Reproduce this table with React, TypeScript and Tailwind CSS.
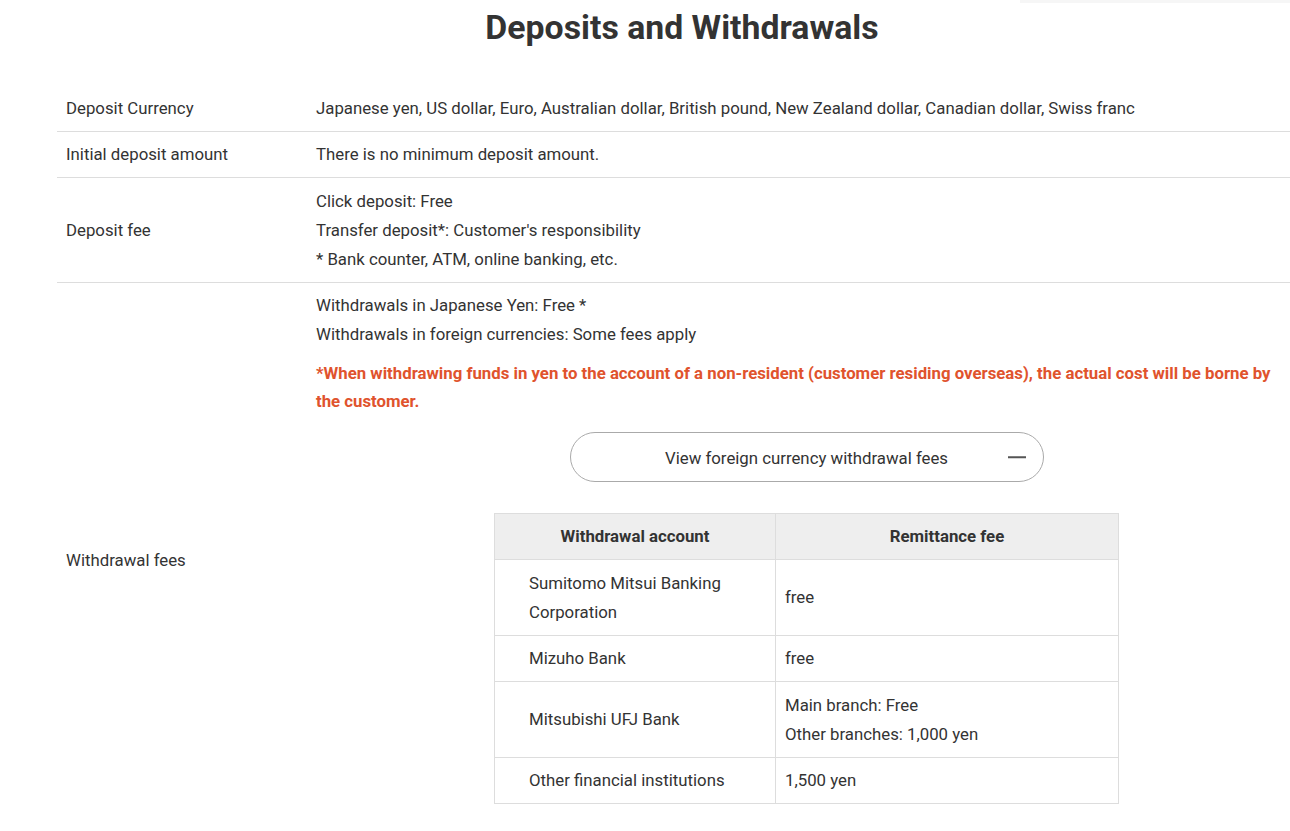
const font = { fontFamily: 'Roboto, "Noto Sans", sans-serif' };

const feeRows: { account: string[]; fee: string[] }[] = [
  { account: ['Sumitomo Mitsui Banking', 'Corporation'], fee: ['free'] },
  { account: ['Mizuho Bank'], fee: ['free'] },
  { account: ['Mitsubishi UFJ Bank'], fee: ['Main branch: Free', 'Other branches: 1,000 yen'] },
  { account: ['Other financial institutions'], fee: ['1,500 yen'] },
];

function Row({ label, children, last }: { label: string; children: React.ReactNode; last?: boolean }) {
  return (
    <div className={`flex ${last ? '' : 'border-b border-[#dddddd]'}`}>
      <div className="w-[250px] shrink-0 flex items-center pl-[9px] pt-[1px]">{label}</div>
      <div className="flex-1 pl-[9px]">{children}</div>
    </div>
  );
}

function FeeTable() {
  return (
    <table className="w-[625px] mx-auto border-collapse text-[#333]">
      <thead>
        <tr className="bg-[#eeeeee] h-[46px]">
          <th className="w-[281px] border border-[#dddddd] font-bold">Withdrawal account</th>
          <th className="border border-[#dddddd] font-bold">Remittance fee</th>
        </tr>
      </thead>
      <tbody>
        {feeRows.map((r) => {
          const tall = r.account.length > 1 || r.fee.length > 1;
          return (
            <tr key={r.account[0]} className={tall ? 'h-[76px]' : 'h-[46px]'}>
              <td className="border border-[#dddddd] pl-[34px] py-0 leading-[29px]">
                {r.account.map((a) => <div key={a}>{a}</div>)}
              </td>
              <td className="border border-[#dddddd] pl-[9px] py-0 leading-[29px]">
                {r.fee.map((f) => <div key={f}>{f}</div>)}
              </td>
            </tr>
          );
        })}
      </tbody>
    </table>
  );
}

export default function App() {
  return (
    <div className="relative w-[1290px] h-[831px] overflow-hidden bg-white text-[#333] text-[16.8px]" style={font}>
      <div className="absolute top-0 right-0 w-[270px] h-[3px] bg-[#f6f6f6]" />
      <div className="ml-[57px] w-[1250px]">
        <h1 className="text-center text-[33.8px] font-bold leading-[56px] text-[#333]">Deposits and Withdrawals</h1>

        <div className="mt-[29px]">
          <Row label="Deposit Currency">
            <div className="h-[46px] pt-[1px] flex items-center">
              Japanese yen, US dollar, Euro, Australian dollar, British pound, New Zealand dollar, Canadian dollar, Swiss franc
            </div>
          </Row>
          <Row label="Initial deposit amount">
            <div className="h-[45px] pt-[1px] flex items-center">There is no minimum deposit amount.</div>
          </Row>
          <Row label="Deposit fee">
            <div className="pt-[9px] pb-[8px] leading-[29px]">
              <div>Click deposit: Free</div>
              <div>Transfer deposit*: Customer's responsibility</div>
              <div>* Bank counter, ATM, online banking, etc.</div>
            </div>
          </Row>
          <Row label="Withdrawal fees" last>
            <div className="pt-[8px] pr-[10px]">
              <div className="leading-[29px]">
                <div>Withdrawals in Japanese Yen: Free *</div>
                <div>Withdrawals in foreign currencies: Some fees apply</div>
              </div>
              <p className="mt-[10px] font-bold text-[#e0532d] leading-[28px]">
                *When withdrawing funds in yen to the account of a non-resident (customer residing overseas), the actual cost will be borne by the customer.
              </p>
              <button className="relative mx-auto mt-[17px] flex h-[50px] w-[474px] items-center justify-center rounded-full border border-[#aaaaaa] bg-white pt-[3px] text-[#333]">
                View foreign currency withdrawal fees
                <span className="absolute right-[17px] top-1/2 h-[1.5px] w-[18px] -translate-y-1/2 bg-[#555]" />
              </button>
              <div className="mt-[31px] pb-[34px]">
                <FeeTable />
              </div>
            </div>
          </Row>
        </div>
      </div>
    </div>
  );
}
